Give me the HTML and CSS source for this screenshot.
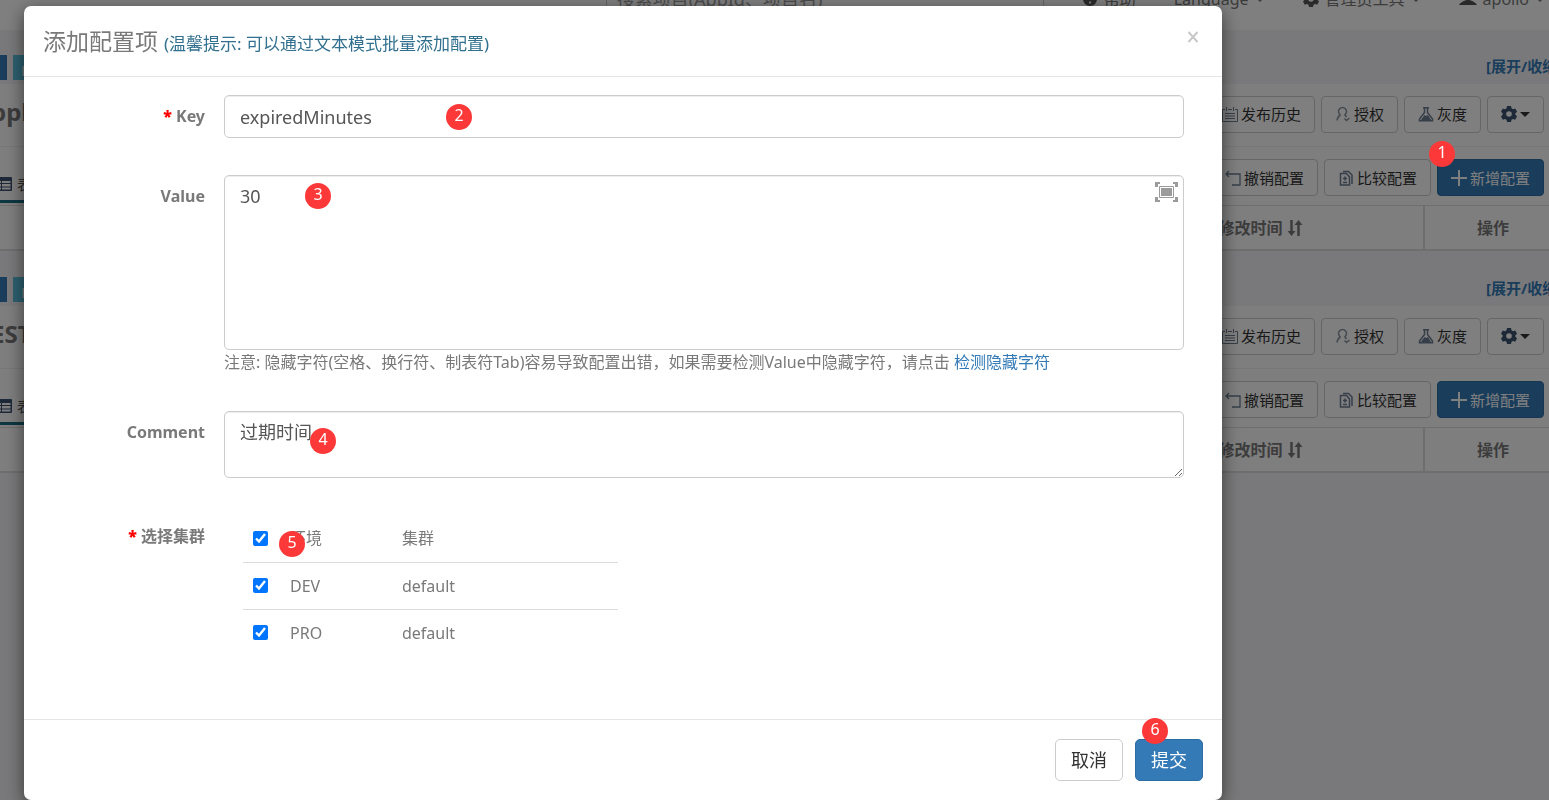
FILE: index.html
```html
<!DOCTYPE html>
<html lang="zh-CN">
<head>
<meta charset="utf-8">
<title>添加配置项</title>
<link rel="stylesheet" href="styles.css">
</head>
<body>
<svg class="sprite" aria-hidden="true">
  <symbol id="i-gear" viewBox="0 0 16 16"><path fill-rule="evenodd" d="M6 0h4l.5 2.3 1.5.9 2.2-.8 1.9 3.3-1.7 1.6v1.5l1.7 1.6-1.9 3.3-2.2-.8-1.5.9L10 16H6l-.5-2.2-1.5-.9-2.2.8L0 10.4l1.6-1.6V7.3L0 5.700l1.800-3.300 2.200.8 1.500-.9zM8 5.200a2.800 2.800 0 1 0 0 5.600 2.800 2.800 0 0 0 0-5.600z"/></symbol>
  <symbol id="i-cal" viewBox="0 0 16 16"><path fill="none" stroke="currentColor" d="M3 3.500H.5v12h15v-12H13M6 3.500h4M4.500 1v4M11.500 1v4M3 7.500h10M3 10h10M3 12.500h10"/></symbol>
  <symbol id="i-user" viewBox="0 0 16 16"><path fill="none" stroke="currentColor" stroke-width="1.500" d="M5.500 9a4 4 0 1 1 4 0M5.500 9Q2.500 10.500 2 14.500M9.500 9q1.500.6 2 2M9.500 12.500l2 2 3-2.500"/></symbol>
  <symbol id="i-flask" viewBox="0 0 16 16"><path fill="none" stroke="currentColor" stroke-width="1.500" d="M5 1.700h6M6.500 2v4.500L1.500 13v1.700h13V13L9.500 6.500V2"/><path d="M6.500 9l1.500 1 2-1 3 5H3z"/></symbol>
  <symbol id="i-undo" viewBox="0 0 16 16"><path fill="none" stroke="currentColor" stroke-width="1.300" d="M4 1L1 4l3 3M1 4h14v11H7"/></symbol>
  <symbol id="i-diff" viewBox="0 0 16 16"><path fill="none" stroke="currentColor" stroke-width="1.500" d="M2.500 3.500v11.500h9V7L8.500 3.500zM5 1.500h5.500l3.500 3.500V14M5 8.500h4M7 6.500v4M5 12.500h4"/></symbol>
  <symbol id="i-plus" viewBox="0 0 16 16"><path d="M7 0h2v7h7v2H9v7H7V9H0V7h7z"/></symbol>
  <symbol id="i-sort" viewBox="0 0 16 16"><path fill="none" stroke="currentColor" stroke-width="2.500" d="M4.500 0v14M11.500 16V2"/><path d="M.5 11h8l-4 5zM7.500 5h8l-4-5z"/></symbol>
  <symbol id="i-table" viewBox="0 0 16 16"><path fill-rule="evenodd" d="M1 1h14q1 0 1 1v12q0 1-1 1H1q-1 0-1-1V2q0-1 1-1zM1.500 5v2H5V5zM6 5v2h8.500V5zM1.500 8v2.500H5V8zM6 8v2.500h8.500V8zM1.500 11.500v2H5v-2zM6 11.500v2h8.500v-2z"/></symbol>
  <symbol id="i-help" viewBox="0 0 16 16"><path fill-rule="evenodd" d="M8 1a7 7 0 1 0 0 14A7 7 0 0 0 8 1zM7 10.500h2.200v2H7zM5 6q.2-3 3-3 3 0 3 2.500 0 1.500-1.800 2.600v1H7V7.500q1.800-.8 1.800-1.800 0-.8-.8-.8T7 6z"/></symbol>
  <symbol id="i-person" viewBox="0 0 18 16"><path d="M9 0q3 0 3 4 0 2-1.500 3.500V9q6 2 7.500 5H0q1.500-3 7.500-5V7.500Q6 6 6 4q0-4 3-4z"/></symbol>
</svg>

<div class="page">
  <nav class="nav">
    <div class="nav-row">
      <input class="search" type="text" aria-label="搜索项目" placeholder="搜索项目(AppId、项目名)">
      <div class="nav-links">
        <a href="#"><svg class="ico"><use href="#i-help"/></svg>帮助</a>
        <a href="#">Language<i class="caret"></i></a>
        <a href="#"><svg class="ico"><use href="#i-gear"/></svg>管理员工具<i class="caret"></i></a>
        <a href="#"><svg class="ico wide"><use href="#i-person"/></svg>apollo<i class="caret"></i></a>
      </div>
    </div>
  </nav>

  <section class="ns">
    <div class="ns-top"><span class="tag blue"></span><span class="tag cyan">D</span><a class="fold" href="#">[展开/收缩]</a></div>
    <div class="ns-head">
      <h2>ppl</h2>
      <button class="btn"><svg class="ico"><use href="#i-cal"/></svg>发布历史</button>
      <button class="btn"><svg class="ico pale"><use href="#i-user"/></svg>授权</button>
      <button class="btn"><svg class="ico"><use href="#i-flask"/></svg>灰度</button>
      <button class="btn" aria-label="设置"><svg class="ico dark"><use href="#i-gear"/></svg><i class="caret"></i></button>
    </div>
    <div class="ns-tools">
      <a class="tab" href="#"><svg class="ico dark"><use href="#i-table"/></svg>表格</a>
      <button class="btn"><svg class="ico"><use href="#i-undo"/></svg>撤销配置</button>
      <button class="btn"><svg class="ico"><use href="#i-diff"/></svg>比较配置</button>
      <button class="btn primary"><svg class="ico"><use href="#i-plus"/></svg>新增配置</button>
    </div>
    <table class="items"><thead><tr><td></td><th class="c-time">最后修改时间 <svg class="ico"><use href="#i-sort"/></svg></th><th class="c-op">操作</th></tr></thead></table>
  </section>

  <section class="ns">
    <div class="ns-top"><span class="tag blue"></span><span class="tag cyan">D</span><a class="fold" href="#">[展开/收缩]</a></div>
    <div class="ns-head">
      <h2>EST</h2>
      <button class="btn"><svg class="ico"><use href="#i-cal"/></svg>发布历史</button>
      <button class="btn"><svg class="ico pale"><use href="#i-user"/></svg>授权</button>
      <button class="btn"><svg class="ico"><use href="#i-flask"/></svg>灰度</button>
      <button class="btn" aria-label="设置"><svg class="ico dark"><use href="#i-gear"/></svg><i class="caret"></i></button>
    </div>
    <div class="ns-tools">
      <a class="tab" href="#"><svg class="ico dark"><use href="#i-table"/></svg>表格</a>
      <button class="btn"><svg class="ico"><use href="#i-undo"/></svg>撤销配置</button>
      <button class="btn"><svg class="ico"><use href="#i-diff"/></svg>比较配置</button>
      <button class="btn primary"><svg class="ico"><use href="#i-plus"/></svg>新增配置</button>
    </div>
    <table class="items"><thead><tr><td></td><th class="c-time">最后修改时间 <svg class="ico"><use href="#i-sort"/></svg></th><th class="c-op">操作</th></tr></thead></table>
  </section>
</div>

<div class="backdrop">
  <span class="step s1">1</span>
  <form class="modal" role="dialog" aria-labelledby="dlg-title">
    <header class="modal-head">
      <h1 id="dlg-title">添加配置项 <small>(温馨提示: 可以通过文本模式批量添加配置)</small></h1>
      <button class="close" type="button" aria-label="关闭"><svg viewBox="0 0 12 12"><path d="M1.500 1l9 10M10.500 1l-9 10"/></svg></button>
    </header>
    <div class="modal-body">
      <div class="row">
        <label for="key"><b>*</b> Key</label>
        <div class="field"><input id="key" class="box" type="text" value="expiredMinutes"><span class="step s2">2</span></div>
      </div>
      <div class="row">
        <label for="value">Value</label>
        <div class="field">
          <textarea id="value" class="box value">30</textarea>
          <button class="full" type="button" aria-label="全屏"><svg viewBox="0 0 23 20"><path d="M0 0h5v2H3v3H0zM18 0h5v5h-3V2h-2zM0 15h3v3h2v2H0zM20 15h3v5h-5v-2h2zM6 6h11v8H6z"/><path d="M4.500 4.500h14v11h-14z" fill="none" stroke="#9b9b9b"/></svg></button>
          <span class="step s3">3</span>
          <p class="note">注意: 隐藏字符(空格、换行符、制表符Tab)容易导致配置出错，如果需要检测Value中隐藏字符，请点击 <a href="#">检测隐藏字符</a></p>
        </div>
      </div>
      <div class="row">
        <label for="comment">Comment</label>
        <div class="field"><textarea id="comment" class="box comment">过期时间</textarea><span class="step s4">4</span></div>
      </div>
      <div class="row">
        <span class="label"><b>*</b> 选择集群</span>
        <div class="field">
          <table class="clusters">
            <thead><tr><td class="c-check"><input type="checkbox" aria-label="全选" checked></td><th class="c-env">环境</th><th>集群</th></tr></thead>
            <tbody>
              <tr><td><input type="checkbox" aria-label="DEV default" checked></td><td>DEV</td><td>default</td></tr>
              <tr><td><input type="checkbox" aria-label="PRO default" checked></td><td>PRO</td><td>default</td></tr>
            </tbody>
          </table>
          <span class="step s5">5</span>
        </div>
      </div>
    </div>
    <footer class="modal-foot">
      <button class="act" type="button">取消</button>
      <button class="act primary" type="submit">提交</button>
      <span class="step s6">6</span>
    </footer>
  </form>
</div>
</body>
</html>
```

FILE: styles.css
```css
* { box-sizing: border-box; }
body {
  margin: 0;
  background: #f3f3f6;
  color: #797979;
  font: 16px/24px "Noto Sans", "Noto Sans CJK SC", sans-serif;
  overflow: hidden;
}
button, input, textarea { font: inherit; }
h1, h2, p { margin: 0; font-weight: 400; }
a { text-decoration: none; }
.sprite { position: absolute; width: 0; height: 0; }
.ico { width: 16px; height: 16px; flex: none; fill: currentColor; }
.ico.wide { width: 18px; }
.caret {
  width: 0; height: 0;
  border: 5px solid transparent;
  border-top-color: currentColor;
  border-bottom: 0;
}

/* Page */
.nav { height: 30px; background: #fff; display: flex; align-items: flex-end; }
.nav-row {
  flex: 1; height: 62px; padding-right: 4px;
  display: flex; align-items: center; justify-content: flex-end; gap: 38px;
}
.search {
  width: 438px; height: 46px; padding: 0 10px;
  border: 1px solid #ccc; background: #fff; font-size: 18px;
}
.search::placeholder { color: #999; }
.nav-links { display: flex; gap: 38px; }
.nav-links a { display: flex; align-items: center; gap: 6px; color: #797979; white-space: nowrap; }
.nav-links .ico { color: #555; }

.ns { padding-bottom: 1px; }
.ns-top { height: 54px; padding-top: 25px; display: flex; align-items: flex-start; gap: 6px; overflow: hidden; }
.tag { height: 25px; color: #fff; font-size: 15px; line-height: 30px; }
.tag.blue { width: 7px; background: #337ab7; }
.tag.cyan { width: 60px; padding-left: 8px; background: #5bc0de; }
.fold { width: 63px; margin-left: auto; color: #337ab7; font-size: 15px; line-height: 22px; font-weight: 700; white-space: nowrap; }
.ns-head, .ns-tools { display: flex; align-items: center; gap: 6px; padding-right: 5px; background: #fdfdfd; }
.ns-head { height: 62px; padding-bottom: 2px; }
.ns-head h2 { margin: 0 auto 4px -9px; color: #797979; font-size: 24px; font-weight: 700; line-height: 32px; }
.ns-tools { height: 59px; padding-top: 3px; border-top: 1px solid #eee; }
.tab {
  align-self: stretch; width: 70px; margin: 0 auto 2px 0; padding-top: 18px;
  border-bottom: 3px solid #1a6e83; color: #555; font-size: 15px;
  display: flex; align-items: center; gap: 5px;
}
.tab .ico { margin-left: -4px; }
.btn {
  height: 37px; padding: 0 13px; border: 1px solid #ccc; border-radius: 4px;
  background: #fff; color: #333; font-size: 15px; white-space: nowrap;
  display: flex; align-items: center; gap: 3px;
}
.btn .ico { color: #6c7d92; }
.ico.dark, .btn .ico.dark { color: #3c5271; }
.btn .ico.pale { color: #8a94a0; }
.btn.primary { background: #337ab7; border-color: #2e6da4; color: #fff; }
.btn.primary .ico { color: #fff; }
.items { width: 100%; height: 46px; table-layout: fixed; border-collapse: collapse; background: #fdfdfd; border: solid #ddd; border-width: 1px 0 2px; }
.items th { padding: 0; font-weight: 700; }
.items .ico { vertical-align: -2px; }
.c-time { width: 358px; }
.items .c-op { width: 125px; padding-left: 12px; border-left: 2px solid #ddd; }

/* Dialog */
.backdrop { position: fixed; inset: 0; background: rgba(0, 0, 0, .5); overflow: hidden; }
.modal {
  margin: 6px 327px 0 24px; border-radius: 7px; background: #fff;
  box-shadow: 0 5px 18px rgba(0, 0, 0, .55);
}
.modal-head {
  min-height: 71px; padding: 2px 19px 0; border-bottom: 1px solid #e5e5e5;
  display: flex; align-items: center; justify-content: space-between;
}
h1 { font-size: 23px; line-height: 32px; }
h1 small { color: #31708f; font-size: 17px; }
.close { width: 20px; height: 20px; margin-bottom: 10px; padding: 4px; border: 0; background: none; }
.close svg { display: block; width: 12px; height: 12px; fill: none; stroke: #c8c8c8; stroke-width: 2; }
.modal-body { padding: 18px 38px 63px 0; display: grid; gap: 37px; }
.row { display: grid; grid-template-columns: 181px 1fr; gap: 19px; }
.row > label, .label { font-weight: 700; font-size: 16px; line-height: 42px; text-align: right; }
.row b { color: #f00; }
.field { position: relative; }
.box {
  display: block; width: 100%; height: 43px; padding: 8px 15px;
  border: 1px solid #ccc; border-radius: 5px; background: #fff; color: #555;
  font-size: 18px; box-shadow: inset 0 1px 1px rgba(0, 0, 0, .075); resize: none;
}
.value { height: 175px; }
.comment { height: 67px; resize: vertical; }
.full { position: absolute; top: 7px; right: 6px; padding: 0; border: 0; background: none; }
.full svg { display: block; width: 23px; height: 20px; fill: #9b9b9b; }
.note a { color: #337ab7; }
.clusters { width: 375px; margin-left: 19px; table-layout: fixed; border-collapse: collapse; }
.clusters th, .clusters td { height: 47px; padding: 0 10px; text-align: left; font-weight: 400; }
.clusters tbody tr { border-top: 1px solid #ddd; }
.clusters input { display: block; width: 15px; height: 15px; margin: 0; }
.c-check { width: 37px; }
.c-env { width: 112px; }
.modal-foot {
  position: relative; padding: 19px; border-top: 1px solid #e5e5e5;
  display: flex; justify-content: flex-end; gap: 12px;
}
.act { height: 42px; padding: 0 15px; border: 1px solid #ccc; border-radius: 5px; background: #fff; color: #333; font-size: 18px; }
.act.primary { background: #337ab7; border-color: #2e6da4; color: #fff; }

/* Numbered markers */
.step {
  position: absolute; width: 26px; height: 26px; border-radius: 50%;
  background: #fc3838; color: #fff; line-height: 23px; text-align: center;
}
.s1 { top: 141px; right: 94px; }
.s2 { top: 9px; left: 222px; }
.s3 { top: 8px; left: 81px; }
.s4 { top: 17px; left: 86px; }
.s5 { top: 16px; left: 55px; }
.s6 { top: -2px; right: 54px; }
```
